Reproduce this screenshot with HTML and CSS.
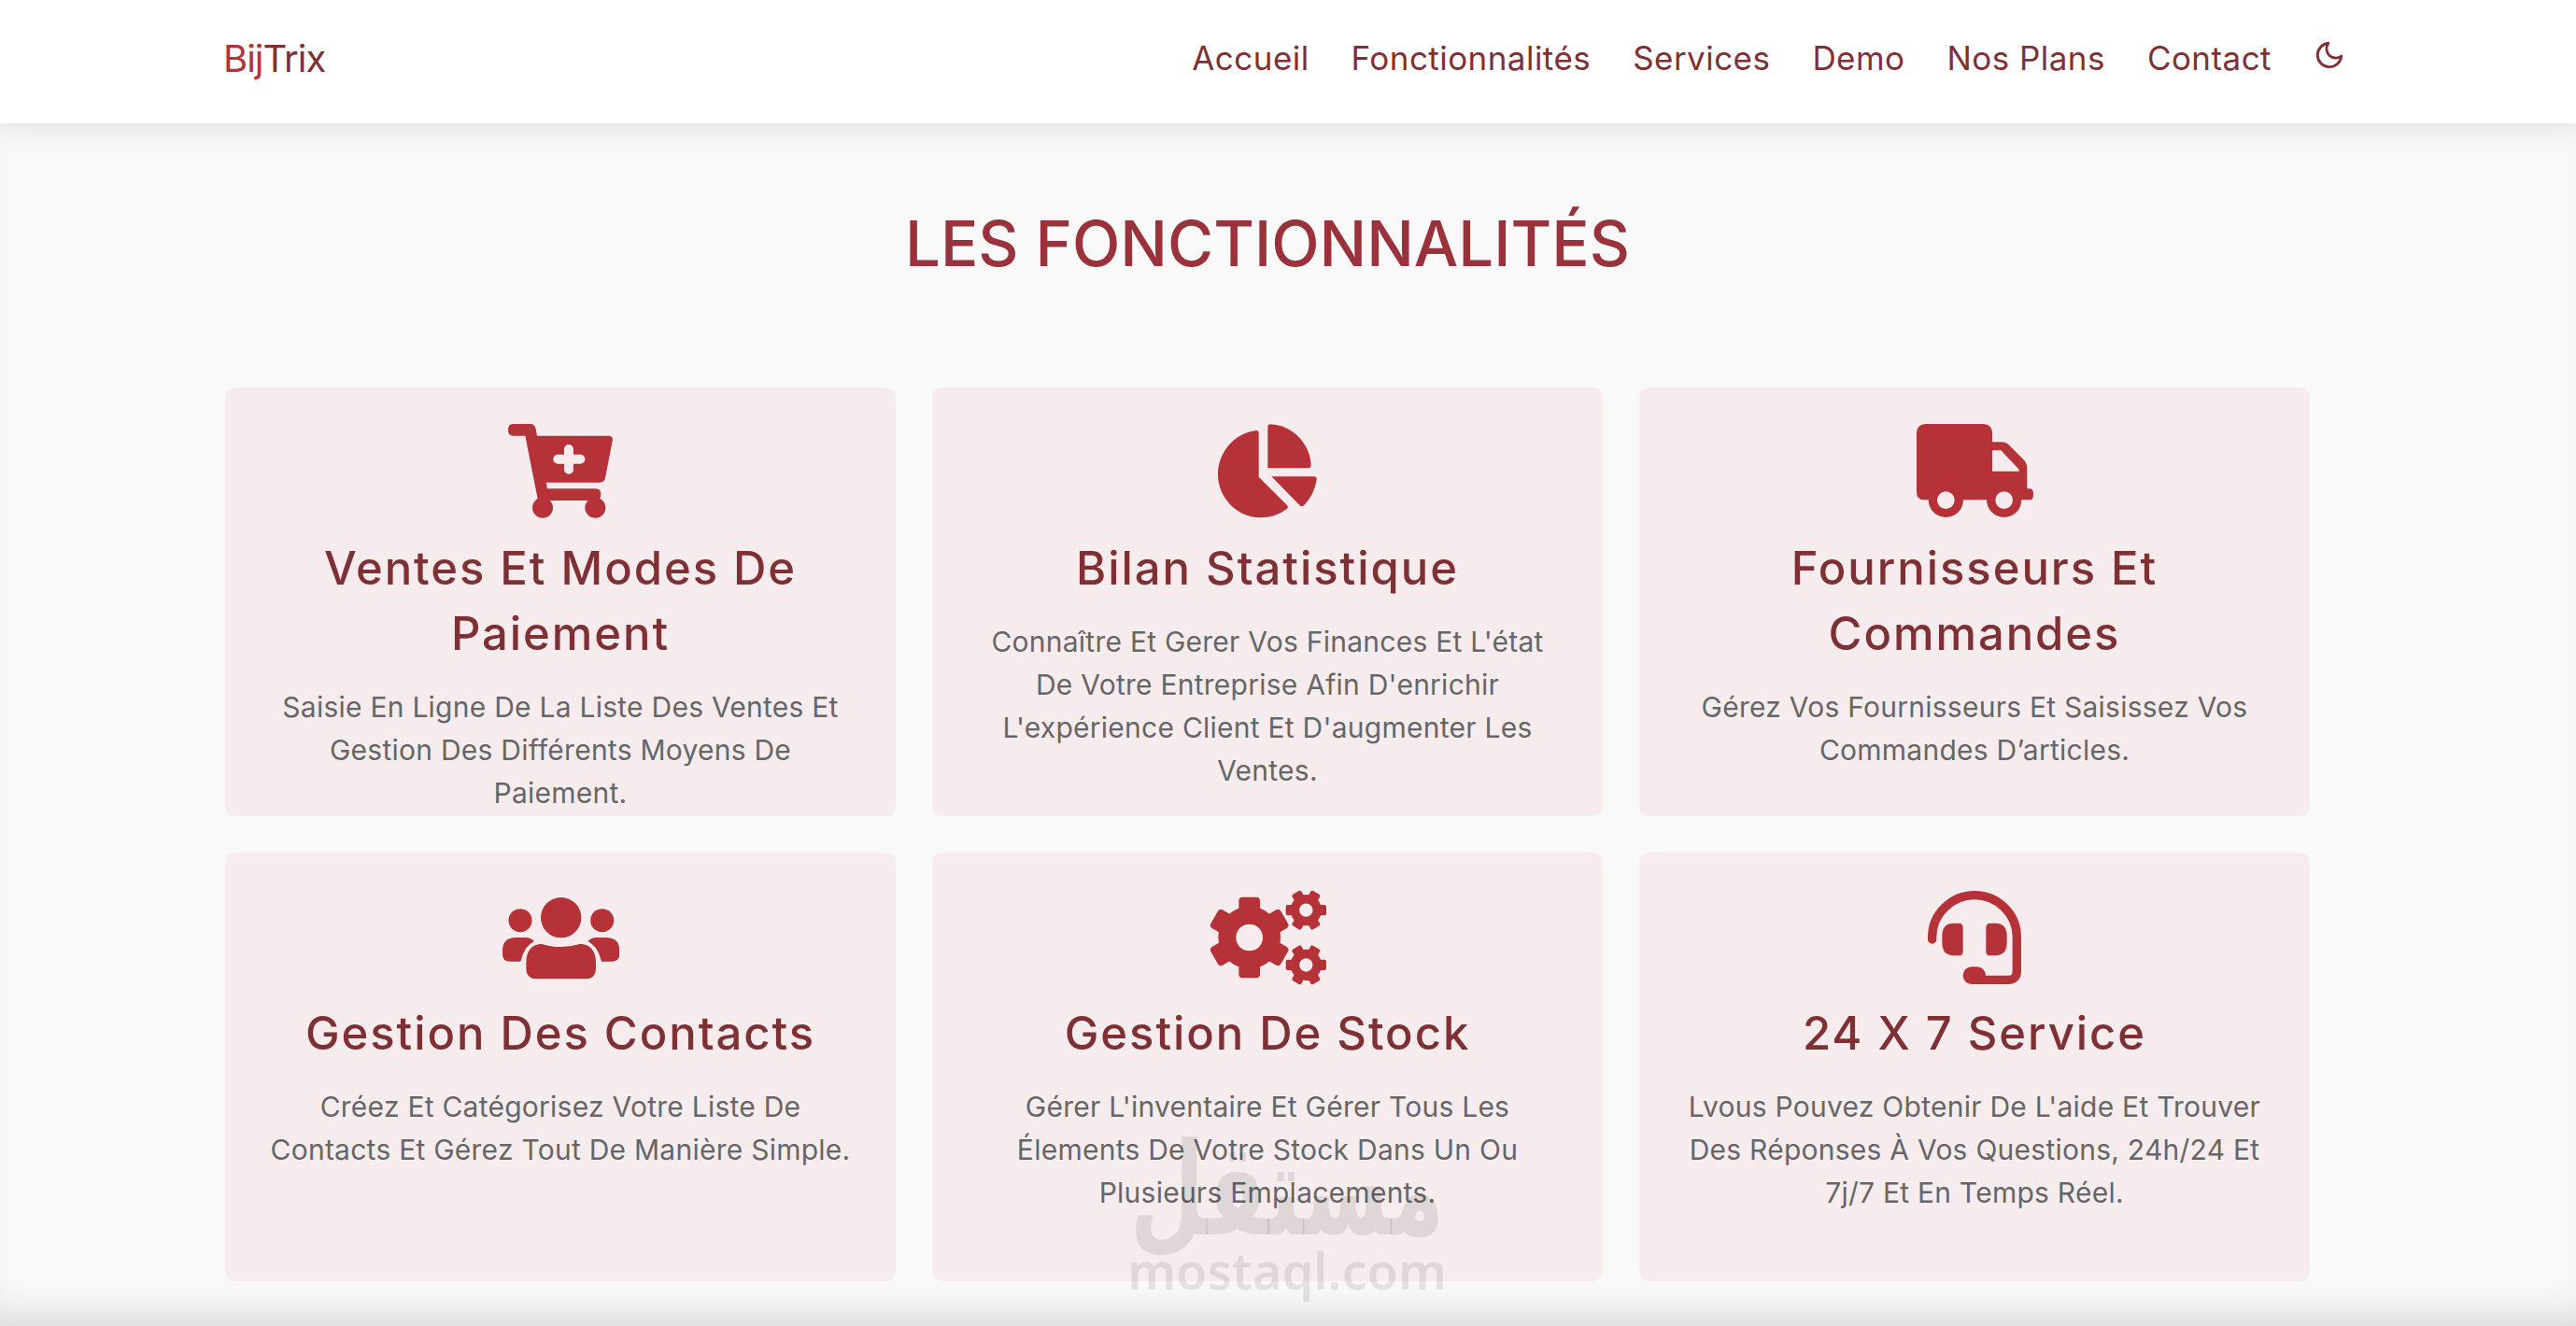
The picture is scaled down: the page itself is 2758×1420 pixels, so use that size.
FILE: index.html
```html
<!DOCTYPE html>
<html lang="fr">
<head>
    <meta charset="UTF-8">
    <meta name="viewport" content="width=device-width, initial-scale=1.0">
    <title>BijTrix</title>
    <link rel="stylesheet" href="styles.css">
</head>
<body>
    <header class="site-header">
        <a class="brand" href="#"><span class="brand-start">Bij</span>Trix</a>
        <nav class="main-nav">
            <a href="#">Accueil</a>
            <a href="#">Fonctionnalités</a>
            <a href="#">Services</a>
            <a href="#">Demo</a>
            <a href="#">Nos Plans</a>
            <a href="#">Contact</a>
            <svg class="theme-icon" viewBox="0 0 24 24"><path d="M21 12.79A9 9 0 1 1 11.21 3 7 7 0 0 0 21 12.79z"/></svg>
        </nav>
    </header>

    <main class="features">
        <h1 class="features-title">LES FONCTIONNALITÉS</h1>

        <div class="features-grid">
            <article class="feature-card">
                <svg class="feature-icon" width="112" height="112" viewBox="70 45 336 336">
                    <path d="M85 72H140Q156 72 159 88L163 110H392Q409 110 405 127L382 246Q379 260 364 260H192L196 280H352Q368 280 368 298Q368 318 350 318H166L125 110H85Q70 110 70 91Q70 72 85 72Z"/>
                    <circle cx="181" cy="341" r="33"/>
                    <circle cx="350" cy="341" r="33"/>
                    <path class="icon-cut" d="M230 185H302M265 153V218"/>
                </svg>
                <h2>Ventes Et Modes De Paiement</h2>
                <p>Saisie En Ligne De La Liste Des Ventes Et Gestion Des Différents Moyens De Paiement.</p>
            </article>

            <article class="feature-card">
                <svg class="feature-icon" width="106" height="112" viewBox="160 45 318 336">
                    <path d="M283 93Q291 93 291 102V242L382 333Q388 340 380 346Q345 373 298 373C222 373 160 310 160 234C160 162 215 100 283 93Z"/>
                    <path d="M328 73C398 76 455 133 459 203Q459 213 450 214H320V82Q320 73 328 73Z"/>
                    <path d="M332 241H468Q478 241 477 251Q470 298 436 334Q430 340 423 334Z"/>
                </svg>
                <h2>Bilan Statistique</h2>
                <p>Connaître Et Gerer Vos Finances Et L'état De Votre Entreprise Afin D'enrichir L'expérience Client Et D'augmenter Les Ventes.</p>
            </article>

            <article class="feature-card">
                <svg class="feature-icon" width="125" height="112" viewBox="93 45 375 336">
                    <path fill-rule="evenodd" d="M125 72H305Q336 72 336 104V130H365Q380 130 390 140L436 186Q448 198 448 214V280H458Q468 280 468 298Q468 316 458 316H430A56 56 0 0 1 318 316H243A56 56 0 0 1 131 316H118Q93 316 93 290V104Q93 72 125 72ZM336 157V224H422V218L364 157ZM159 317A28 28 0 0 0 215 317A28 28 0 0 0 159 317ZM346 317A28 28 0 0 0 402 317A28 28 0 0 0 346 317Z"/>
                </svg>
                <h2>Fournisseurs Et Commandes</h2>
                <p>Gérez Vos Fournisseurs Et Saisissez Vos Commandes D’articles.</p>
            </article>

            <article class="feature-card">
                <svg class="feature-icon" width="125" height="112" viewBox="50 9 375 336">
                    <circle cx="238" cy="128" r="65"/>
                    <circle cx="107" cy="137" r="37.5"/>
                    <circle cx="370" cy="137" r="37.5"/>
                    <path d="M175 212Q205 222 238 222Q270 222 300 212Q350 215 350 275V290Q350 325 315 325H162Q126 325 126 290V275Q126 215 175 212Z"/>
                    <path d="M92 192H125Q140 192 152 204Q118 222 108 269H75Q50 269 50 245V235Q50 192 92 192Z"/>
                    <path d="M384 192H351Q336 192 324 204Q358 222 368 269H401Q426 269 426 245V235Q426 192 384 192Z"/>
                </svg>
                <h2>Gestion Des Contacts</h2>
                <p>Créez Et Catégorisez Votre Liste De Contacts Et Gérez Tout De Manière Simple.</p>
            </article>

            <article class="feature-card">
                <svg class="feature-icon" width="125" height="112" viewBox="72 9 375 336">
                    <defs>
                        <g id="gear">
                            <circle r="100"/>
                            <rect x="-34" y="-130" width="68" height="60" rx="12"/>
                            <rect x="-34" y="-130" width="68" height="60" rx="12" transform="rotate(60)"/>
                            <rect x="-34" y="-130" width="68" height="60" rx="12" transform="rotate(120)"/>
                            <rect x="-34" y="-130" width="68" height="60" rx="12" transform="rotate(180)"/>
                            <rect x="-34" y="-130" width="68" height="60" rx="12" transform="rotate(240)"/>
                            <rect x="-34" y="-130" width="68" height="60" rx="12" transform="rotate(300)"/>
                            <circle class="icon-hole" r="43"/>
                        </g>
                    </defs>
                    <use href="#gear" transform="translate(200 192)"/>
                    <use href="#gear" transform="translate(382 104) scale(.5) rotate(30)"/>
                    <use href="#gear" transform="translate(382 280) scale(.5) rotate(30)"/>
                </svg>
                <h2>Gestion De Stock</h2>
                <p>Gérer L'inventaire Et Gérer Tous Les Élements De Votre Stock Dans Un Ou Plusieurs Emplacements.</p>
            </article>

            <article class="feature-card">
                <svg class="feature-icon" width="100" height="112" viewBox="72 9 300 336">
                    <path class="icon-line" d="M86 198V190C86 115 150 56 222 56C295 56 358 115 358 190V300Q358 328 330 328H225"/>
                    <rect x="185" y="286" width="73" height="56" rx="28"/>
                    <path d="M155 146H172Q185 146 185 160V236Q185 250 172 250H155Q118 250 118 210V186Q118 146 155 146Z"/>
                    <path d="M289 146H272Q259 146 259 160V236Q259 250 272 250H289Q326 250 326 210V186Q326 146 289 146Z"/>
                </svg>
                <h2>24 X 7 Service</h2>
                <p>Lvous Pouvez Obtenir De L'aide Et Trouver Des Réponses À Vos Questions, 24h/24 Et 7j/7 Et En Temps Réel.</p>
            </article>
        </div>
    </main>

    <div class="watermark">
        <span class="watermark-ar" lang="ar" dir="rtl">مستقل</span>
        <span class="watermark-en">mostaql.com</span>
    </div>
</body>
</html>
```

FILE: styles.css
```css
:root {
    --brand-red: #b63239;
    --dark-red: #7f3035;
    --card-bg: #f6ecee;
    --page-bg: #f9f9f9;
    --text-gray: #666666;
}

* {
    margin: 0;
    padding: 0;
    box-sizing: border-box;
    font-family: 'Inter', sans-serif;
}

body {
    background-color: var(--page-bg);
    height: 1420px;
    overflow: hidden;
    position: relative;
}

.site-header {
    position: relative;
    z-index: 2;
    height: 132px;
    padding: 0 247px 8px 239px;
    display: flex;
    align-items: center;
    justify-content: space-between;
    background-color: #ffffff;
    box-shadow: 0 0 32px rgba(0, 0, 0, 0.14);
}

.brand {
    color: var(--dark-red);
    font-size: 40px;
    font-weight: 400;
    letter-spacing: -1px;
    text-decoration: none;
}

.brand-start {
    color: var(--brand-red);
    font-family: inherit;
}

.main-nav {
    display: flex;
    align-items: center;
    gap: 45px;
}

.main-nav a {
    color: var(--dark-red);
    font-size: 35px;
    letter-spacing: 0.45px;
    text-decoration: none;
}

.theme-icon {
    width: 34px;
    height: 34px;
    margin-top: -6px;
    fill: none;
    stroke: var(--dark-red);
    stroke-width: 2;
    stroke-linejoin: round;
}

.features {
    height: 1288px;
    padding: 79px 285px 0 241px;
    box-shadow: inset 0 -34px 40px -24px rgba(0, 0, 0, 0.14);
}

.features-title {
    height: 100px;
    margin-bottom: 104px;
    color: #99323a;
    font-size: 67px;
    font-weight: 500;
    line-height: 100px;
    text-align: center;
}

.features-grid {
    display: grid;
    grid-template-columns: repeat(3, 1fr);
    grid-auto-rows: 459px;
    gap: 39px;
}

.feature-card {
    padding: 30px 44px 0;
    background-color: var(--card-bg);
    border-radius: 10px;
    text-align: center;
}

.feature-icon {
    display: block;
    margin: 0 auto 17px;
    fill: var(--brand-red);
}

.icon-cut {
    fill: none;
    stroke: var(--card-bg);
    stroke-width: 30;
    stroke-linecap: round;
}

.icon-hole {
    fill: var(--card-bg);
}

.icon-line {
    fill: none;
    stroke: var(--brand-red);
    stroke-width: 28;
    stroke-linecap: round;
}

.feature-card h2 {
    margin-bottom: 20px;
    color: var(--dark-red);
    font-size: 49px;
    font-weight: 500;
    line-height: 70px;
    letter-spacing: 1.95px;
}

.feature-card p {
    color: var(--text-gray);
    font-size: 30px;
    line-height: 46px;
    letter-spacing: 0.25px;
}

.watermark {
    position: absolute;
    left: 1213px;
    top: 1240px;
    width: 330px;
    z-index: 3;
    display: flex;
    flex-direction: column;
    align-items: center;
    color: rgba(0, 0, 0, 0.09);
    pointer-events: none;
}

.watermark-ar {
    height: 92px;
    font-family: 'DejaVu Sans', sans-serif;
    font-size: 92px;
    font-weight: 700;
    line-height: 96px;
    transform: scaleY(1.5);
    transform-origin: center 80%;
}

.watermark-en {
    font-family: 'Noto Sans', sans-serif;
    font-size: 54px;
    font-weight: 600;
    line-height: 56px;
}
```
